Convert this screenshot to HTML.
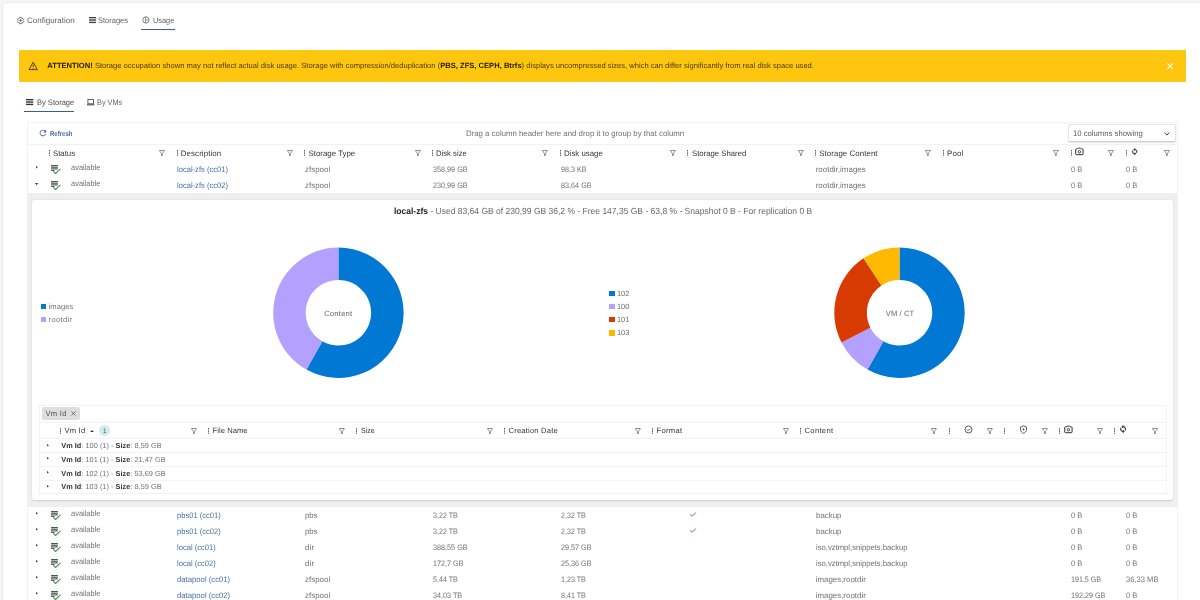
<!DOCTYPE html>
<html><head><meta charset="utf-8"><title>Usage</title>
<style>
html,body{margin:0;padding:0;}
body{width:1200px;height:600px;overflow:hidden;background:#f5f5f5;font-family:"Liberation Sans", sans-serif;position:relative;}
#o{position:absolute;left:0;top:0;width:1200px;height:600px;will-change:transform;}
#w{position:absolute;left:0;top:0;width:1200px;height:600px;}
.t{position:absolute;white-space:nowrap;line-height:1;transform-origin:0 50%;text-rendering:geometricPrecision;}
svg{position:absolute;overflow:visible;}
</style></head><body><div id="o"><div id="w">
<div style="position:absolute;left:3px;top:3px;width:1200px;height:600px;background:#fff;border-radius:3px 0 0 0;box-shadow:0 0 2px rgba(0,0,0,.14);"></div>
<svg style="left:17.1px;top:16.7px" width="7.2" height="7.2" viewBox="0 0 24 24"><path d="M9.30 1.44L14.70 1.44L15.68 4.56L16.60 5.09L19.80 4.38L22.49 9.05L20.28 11.47L20.28 12.53L22.49 14.95L19.80 19.62L16.60 18.91L15.68 19.44L14.70 22.56L9.30 22.56L8.32 19.44L7.40 18.91L4.20 19.62L1.51 14.95L3.72 12.53L3.72 11.47L1.51 9.05L4.20 4.38L7.40 5.09L8.32 4.56z" fill="none" stroke="#6c6c6c" stroke-width="3.100" stroke-linejoin="round"/><circle cx="12" cy="12" r="3.300" fill="#2e2e2e"/></svg>
<svg style="left:88.8px;top:17.3px" width="7" height="6.1" viewBox="0 0 7 6.1"><rect x="0" y="0.00" width="7" height="1.37" fill="#444"/><rect x="0" y="2.36" width="7" height="1.37" fill="#444"/><rect x="0" y="4.73" width="7" height="1.37" fill="#444"/></svg>
<svg style="left:141.9px;top:16.4px" width="7.9" height="7.9" viewBox="0 0 24 24"><circle cx="12" cy="12" r="9.700" fill="none" stroke="#555" stroke-width="2.2"/><path d="M10.600 3v18M10.600 12H21.500" fill="none" stroke="#555" stroke-width="1.900"/></svg>
<div style="position:absolute;left:140.7px;top:29.05px;width:33.9px;height:1.35px;background:#40599c;"></div>
<div style="position:absolute;left:19px;top:49.6px;width:1167px;height:32.3px;background:#ffc60f;border-radius:1px;"></div>
<svg style="left:27.8px;top:61.2px" width="10.4" height="9" viewBox="0 0 24 22"><path d="M12 2.800L22.200 21H1.800z" fill="none" stroke="#4a3a00" stroke-width="2.300" stroke-linejoin="round"/><path d="M12 9v6M12 16.800v2" stroke="#4a3a00" stroke-width="2.200"/></svg>
<svg style="left:1167px;top:62.6px" width="6.2" height="6.2" viewBox="0 0 6.2 6.2"><path d="M.4.400L5.800 5.800M5.800.400L.4 5.800" stroke="#fffaf0" stroke-width="1.100"/></svg>
<svg style="left:26px;top:99px" width="7.3" height="6.1" viewBox="0 0 7.3 6.1"><rect x="0" y="0.00" width="7.3" height="1.37" fill="#333"/><rect x="0" y="2.36" width="7.3" height="1.37" fill="#333"/><rect x="0" y="4.73" width="7.3" height="1.37" fill="#333"/></svg>
<div style="position:absolute;left:24.4px;top:110.65px;width:49.4px;height:1.4px;background:#3b5a9b;"></div>
<svg style="left:86.8px;top:98.9px" width="7.4" height="6.4" viewBox="0 0 7.4 6.4"><rect x=".9" y=".5" width="5.600" height="4.300" fill="none" stroke="#4a4a4a" stroke-width=".85"/><path d="M0 5.800h7.400" stroke="#4a4a4a" stroke-width="1.100"/></svg>
<div style="position:absolute;left:27.2px;top:121.7px;width:1150.8px;height:500px;border:1px solid #f1f1f1;border-bottom:none;box-sizing:border-box;"></div>
<svg style="left:38.35px;top:128.45px" width="9.9" height="9.9" viewBox="0 0 24 24"><path d="M17.650 6.350A8 8 0 1019.730 14h-2.080A6 6 0 1112 6c1.660 0 3.140.69 4.220 1.780L13 11h7V4z" fill="#4d69a6"/></svg>
<div style="position:absolute;left:1068.3px;top:124.3px;width:107.3px;height:17.5px;border:1px solid #e4e4e4;border-bottom-color:#d0d0d0;border-radius:2px;box-sizing:border-box;background:#fff;box-shadow:0 1px 1.500px rgba(0,0,0,.10);"></div>
<svg style="left:1164.4px;top:131.6px" width="5.8" height="3.9" viewBox="0 0 5.8 3.9"><path d="M.4.500L2.900 3.100 5.400.500" fill="none" stroke="#333" stroke-width=".95"/></svg>
<div style="position:absolute;left:27.2px;top:144.3px;width:1150.8px;height:1.2px;background:#f2f2f2;"></div>
<svg style="left:48.8px;top:150.1px" width="1.1" height="5.9" viewBox="0 0 1.1 5.9"><rect x="0" y="0" width="1" height=".95" fill="#4a4a4a"/><rect x="0" y="1.620" width="1" height=".95" fill="#4a4a4a"/><rect x="0" y="3.240" width="1" height=".95" fill="#4a4a4a"/><rect x="0" y="4.860" width="1" height=".95" fill="#4a4a4a"/></svg>
<svg style="left:159.2px;top:150.1px" width="5.8" height="5.9" viewBox="0 0 5.8 5.9"><path d="M.4.500h5L3.350 3.700v1.900H2.450V3.700z" fill="none" stroke="#505050" stroke-width=".62" stroke-linejoin="round"/></svg>
<svg style="left:176.51px;top:150.1px" width="1.1" height="5.9" viewBox="0 0 1.1 5.9"><rect x="0" y="0" width="1" height=".95" fill="#4a4a4a"/><rect x="0" y="1.620" width="1" height=".95" fill="#4a4a4a"/><rect x="0" y="3.240" width="1" height=".95" fill="#4a4a4a"/><rect x="0" y="4.860" width="1" height=".95" fill="#4a4a4a"/></svg>
<svg style="left:286.91px;top:150.1px" width="5.8" height="5.9" viewBox="0 0 5.8 5.9"><path d="M.4.500h5L3.350 3.700v1.900H2.450V3.700z" fill="none" stroke="#505050" stroke-width=".62" stroke-linejoin="round"/></svg>
<svg style="left:304.22px;top:150.1px" width="1.1" height="5.9" viewBox="0 0 1.1 5.9"><rect x="0" y="0" width="1" height=".95" fill="#4a4a4a"/><rect x="0" y="1.620" width="1" height=".95" fill="#4a4a4a"/><rect x="0" y="3.240" width="1" height=".95" fill="#4a4a4a"/><rect x="0" y="4.860" width="1" height=".95" fill="#4a4a4a"/></svg>
<svg style="left:414.62px;top:150.1px" width="5.8" height="5.9" viewBox="0 0 5.8 5.9"><path d="M.4.500h5L3.350 3.700v1.900H2.450V3.700z" fill="none" stroke="#505050" stroke-width=".62" stroke-linejoin="round"/></svg>
<svg style="left:431.93px;top:150.1px" width="1.1" height="5.9" viewBox="0 0 1.1 5.9"><rect x="0" y="0" width="1" height=".95" fill="#4a4a4a"/><rect x="0" y="1.620" width="1" height=".95" fill="#4a4a4a"/><rect x="0" y="3.240" width="1" height=".95" fill="#4a4a4a"/><rect x="0" y="4.860" width="1" height=".95" fill="#4a4a4a"/></svg>
<svg style="left:542.33px;top:150.1px" width="5.8" height="5.9" viewBox="0 0 5.8 5.9"><path d="M.4.500h5L3.350 3.700v1.900H2.450V3.700z" fill="none" stroke="#505050" stroke-width=".62" stroke-linejoin="round"/></svg>
<svg style="left:559.64px;top:150.1px" width="1.1" height="5.9" viewBox="0 0 1.1 5.9"><rect x="0" y="0" width="1" height=".95" fill="#4a4a4a"/><rect x="0" y="1.620" width="1" height=".95" fill="#4a4a4a"/><rect x="0" y="3.240" width="1" height=".95" fill="#4a4a4a"/><rect x="0" y="4.860" width="1" height=".95" fill="#4a4a4a"/></svg>
<svg style="left:670.04px;top:150.1px" width="5.8" height="5.9" viewBox="0 0 5.8 5.9"><path d="M.4.500h5L3.350 3.700v1.900H2.450V3.700z" fill="none" stroke="#505050" stroke-width=".62" stroke-linejoin="round"/></svg>
<svg style="left:687.35px;top:150.1px" width="1.1" height="5.9" viewBox="0 0 1.1 5.9"><rect x="0" y="0" width="1" height=".95" fill="#4a4a4a"/><rect x="0" y="1.620" width="1" height=".95" fill="#4a4a4a"/><rect x="0" y="3.240" width="1" height=".95" fill="#4a4a4a"/><rect x="0" y="4.860" width="1" height=".95" fill="#4a4a4a"/></svg>
<svg style="left:797.75px;top:150.1px" width="5.8" height="5.9" viewBox="0 0 5.8 5.9"><path d="M.4.500h5L3.350 3.700v1.900H2.450V3.700z" fill="none" stroke="#505050" stroke-width=".62" stroke-linejoin="round"/></svg>
<svg style="left:815.06px;top:150.1px" width="1.1" height="5.9" viewBox="0 0 1.1 5.9"><rect x="0" y="0" width="1" height=".95" fill="#4a4a4a"/><rect x="0" y="1.620" width="1" height=".95" fill="#4a4a4a"/><rect x="0" y="3.240" width="1" height=".95" fill="#4a4a4a"/><rect x="0" y="4.860" width="1" height=".95" fill="#4a4a4a"/></svg>
<svg style="left:925.46px;top:150.1px" width="5.8" height="5.9" viewBox="0 0 5.8 5.9"><path d="M.4.500h5L3.350 3.700v1.900H2.450V3.700z" fill="none" stroke="#505050" stroke-width=".62" stroke-linejoin="round"/></svg>
<svg style="left:942.77px;top:150.1px" width="1.1" height="5.9" viewBox="0 0 1.1 5.9"><rect x="0" y="0" width="1" height=".95" fill="#4a4a4a"/><rect x="0" y="1.620" width="1" height=".95" fill="#4a4a4a"/><rect x="0" y="3.240" width="1" height=".95" fill="#4a4a4a"/><rect x="0" y="4.860" width="1" height=".95" fill="#4a4a4a"/></svg>
<svg style="left:1053.17px;top:150.1px" width="5.8" height="5.9" viewBox="0 0 5.8 5.9"><path d="M.4.500h5L3.350 3.700v1.900H2.450V3.700z" fill="none" stroke="#505050" stroke-width=".62" stroke-linejoin="round"/></svg>
<svg style="left:1070.5px;top:150.3px" width="1.1" height="5.9" viewBox="0 0 1.1 5.9"><rect x="0" y="0" width="1" height=".95" fill="#4a4a4a"/><rect x="0" y="1.620" width="1" height=".95" fill="#4a4a4a"/><rect x="0" y="3.240" width="1" height=".95" fill="#4a4a4a"/><rect x="0" y="4.860" width="1" height=".95" fill="#4a4a4a"/></svg>
<svg style="left:1075.3px;top:147.0px" width="8.8" height="8.8" viewBox="0 0 24 24"><path d="M9 3L7.170 5H4a2 2 0 00-2 2v12a2 2 0 002 2h16a2 2 0 002-2V7a2 2 0 00-2-2h-3.170L15 3z" fill="none" stroke="#303030" stroke-width="2.700"/><circle cx="12" cy="13" r="3.300" fill="none" stroke="#303030" stroke-width="2.500"/></svg>
<svg style="left:1108.4px;top:150.1px" width="5.8" height="5.9" viewBox="0 0 5.8 5.9"><path d="M.4.500h5L3.350 3.700v1.900H2.450V3.700z" fill="none" stroke="#505050" stroke-width=".62" stroke-linejoin="round"/></svg>
<svg style="left:1125.5px;top:150.3px" width="1.1" height="5.9" viewBox="0 0 1.1 5.9"><rect x="0" y="0" width="1" height=".95" fill="#4a4a4a"/><rect x="0" y="1.620" width="1" height=".95" fill="#4a4a4a"/><rect x="0" y="3.240" width="1" height=".95" fill="#4a4a4a"/><rect x="0" y="4.860" width="1" height=".95" fill="#4a4a4a"/></svg>
<svg style="left:1131.0px;top:147.9px" width="7.4" height="7.4" viewBox="0 0 24 24"><path d="M12 4V1L8 5l4 4V6a6 6 0 015.300 8.800l1.460 1.460A8 8 0 0012 4zM12 18a6 6 0 01-5.300-8.800L5.240 7.740A8 8 0 0012 20v3l4-4-4-4z" fill="#303030" stroke="#303030" stroke-width="1.300" stroke-linejoin="round"/></svg>
<svg style="left:1163.5px;top:150.1px" width="5.8" height="5.9" viewBox="0 0 5.8 5.9"><path d="M.4.500h5L3.350 3.700v1.900H2.450V3.700z" fill="none" stroke="#505050" stroke-width=".62" stroke-linejoin="round"/></svg>
<svg style="left:35.6px;top:166.0px" width="2.2" height="2.6" viewBox="0 0 2.2 2.6"><path d="M0 0L2 1.300 0 2.600z" fill="#444"/></svg>
<svg style="left:51px;top:164.6px" width="10" height="9.2" viewBox="0 0 10 9.2"><rect x="0" y="0" width="6.900" height="1.150" fill="#555"/><rect x="0" y="1.650" width="6.900" height="1.150" fill="#555"/><rect x="0" y="3.300" width="6.900" height="1.150" fill="#555"/><rect x="0" y="4.950" width="3.600" height="1" fill="#555"/><path d="M2.200 6.300L4.600 8.500 9.400 3.900" fill="none" stroke="#3f9142" stroke-width="1.050"/></svg>
<svg style="left:35.0px;top:182.8px" width="3.2" height="2.4" viewBox="0 0 3.2 2.4"><path d="M0 0H3.200L1.600 2.200z" fill="#3a3a3a"/></svg>
<svg style="left:51px;top:180.6px" width="10" height="9.2" viewBox="0 0 10 9.2"><rect x="0" y="0" width="6.900" height="1.150" fill="#555"/><rect x="0" y="1.650" width="6.900" height="1.150" fill="#555"/><rect x="0" y="3.300" width="6.900" height="1.150" fill="#555"/><rect x="0" y="4.950" width="3.600" height="1" fill="#555"/><path d="M2.200 6.300L4.600 8.500 9.400 3.900" fill="none" stroke="#3f9142" stroke-width="1.050"/></svg>
<svg style="left:35.6px;top:512.0px" width="2.2" height="2.6" viewBox="0 0 2.2 2.6"><path d="M0 0L2 1.300 0 2.600z" fill="#444"/></svg>
<svg style="left:51px;top:510.6px" width="10" height="9.2" viewBox="0 0 10 9.2"><rect x="0" y="0" width="6.900" height="1.150" fill="#555"/><rect x="0" y="1.650" width="6.900" height="1.150" fill="#555"/><rect x="0" y="3.300" width="6.900" height="1.150" fill="#555"/><rect x="0" y="4.950" width="3.600" height="1" fill="#555"/><path d="M2.200 6.300L4.600 8.500 9.400 3.900" fill="none" stroke="#3f9142" stroke-width="1.050"/></svg>
<svg style="left:689.8px;top:511.9px" width="6.2" height="4.6" viewBox="0 0 6.2 4.6"><path d="M.3 2.400L2.200 4.200 5.900.400" fill="none" stroke="#4f934f" stroke-width="1"/></svg>
<svg style="left:35.6px;top:528.0px" width="2.2" height="2.6" viewBox="0 0 2.2 2.6"><path d="M0 0L2 1.300 0 2.600z" fill="#444"/></svg>
<svg style="left:51px;top:526.6px" width="10" height="9.2" viewBox="0 0 10 9.2"><rect x="0" y="0" width="6.900" height="1.150" fill="#555"/><rect x="0" y="1.650" width="6.900" height="1.150" fill="#555"/><rect x="0" y="3.300" width="6.900" height="1.150" fill="#555"/><rect x="0" y="4.950" width="3.600" height="1" fill="#555"/><path d="M2.200 6.300L4.600 8.500 9.400 3.900" fill="none" stroke="#3f9142" stroke-width="1.050"/></svg>
<svg style="left:689.8px;top:527.9px" width="6.2" height="4.6" viewBox="0 0 6.2 4.6"><path d="M.3 2.400L2.200 4.200 5.900.400" fill="none" stroke="#4f934f" stroke-width="1"/></svg>
<svg style="left:35.6px;top:544.0px" width="2.2" height="2.6" viewBox="0 0 2.2 2.6"><path d="M0 0L2 1.300 0 2.600z" fill="#444"/></svg>
<svg style="left:51px;top:542.6px" width="10" height="9.2" viewBox="0 0 10 9.2"><rect x="0" y="0" width="6.900" height="1.150" fill="#555"/><rect x="0" y="1.650" width="6.900" height="1.150" fill="#555"/><rect x="0" y="3.300" width="6.900" height="1.150" fill="#555"/><rect x="0" y="4.950" width="3.600" height="1" fill="#555"/><path d="M2.200 6.300L4.600 8.500 9.400 3.900" fill="none" stroke="#3f9142" stroke-width="1.050"/></svg>
<svg style="left:35.6px;top:560.0px" width="2.2" height="2.6" viewBox="0 0 2.2 2.6"><path d="M0 0L2 1.300 0 2.600z" fill="#444"/></svg>
<svg style="left:51px;top:558.6px" width="10" height="9.2" viewBox="0 0 10 9.2"><rect x="0" y="0" width="6.900" height="1.150" fill="#555"/><rect x="0" y="1.650" width="6.900" height="1.150" fill="#555"/><rect x="0" y="3.300" width="6.900" height="1.150" fill="#555"/><rect x="0" y="4.950" width="3.600" height="1" fill="#555"/><path d="M2.200 6.300L4.600 8.500 9.400 3.900" fill="none" stroke="#3f9142" stroke-width="1.050"/></svg>
<svg style="left:35.6px;top:576.0px" width="2.2" height="2.6" viewBox="0 0 2.2 2.6"><path d="M0 0L2 1.300 0 2.600z" fill="#444"/></svg>
<svg style="left:51px;top:574.6px" width="10" height="9.2" viewBox="0 0 10 9.2"><rect x="0" y="0" width="6.900" height="1.150" fill="#555"/><rect x="0" y="1.650" width="6.900" height="1.150" fill="#555"/><rect x="0" y="3.300" width="6.900" height="1.150" fill="#555"/><rect x="0" y="4.950" width="3.600" height="1" fill="#555"/><path d="M2.200 6.300L4.600 8.500 9.400 3.900" fill="none" stroke="#3f9142" stroke-width="1.050"/></svg>
<svg style="left:35.6px;top:592.0px" width="2.2" height="2.6" viewBox="0 0 2.2 2.6"><path d="M0 0L2 1.300 0 2.600z" fill="#444"/></svg>
<svg style="left:51px;top:590.6px" width="10" height="9.2" viewBox="0 0 10 9.2"><rect x="0" y="0" width="6.900" height="1.150" fill="#555"/><rect x="0" y="1.650" width="6.900" height="1.150" fill="#555"/><rect x="0" y="3.300" width="6.900" height="1.150" fill="#555"/><rect x="0" y="4.950" width="3.600" height="1" fill="#555"/><path d="M2.200 6.300L4.600 8.500 9.400 3.900" fill="none" stroke="#3f9142" stroke-width="1.050"/></svg>
<div style="position:absolute;left:28.2px;top:192.8px;width:1148.8px;height:314px;background:#efefef;"></div>
<div style="position:absolute;left:32px;top:199.8px;width:1141px;height:300.5px;background:#fff;border-radius:2px;box-shadow:0 .9px 1.800px rgba(0,0,0,.14),0 .3px .5px rgba(0,0,0,.05);"></div>
<svg style="left:0;top:0" width="1200" height="600" viewBox="0 0 1200 600"><path d="M338.40 247.55A65.2 65.2 0 1 1 306.47 369.60L322.36 341.31A32.75 32.75 0 1 0 338.40 280.00z" fill="#0078d4"/><path d="M306.47 369.60A65.2 65.2 0 0 1 338.40 247.55L338.40 280.00A32.75 32.75 0 0 0 322.36 341.31z" fill="#b4a0ff"/></svg>
<svg style="left:0;top:0" width="1200" height="600" viewBox="0 0 1200 600"><path d="M899.50 247.55A65.2 65.2 0 1 1 867.57 369.60L883.46 341.31A32.75 32.75 0 1 0 899.50 280.00z" fill="#0078d4"/><path d="M867.57 369.60A65.2 65.2 0 0 1 841.51 342.55L870.37 327.72A32.75 32.75 0 0 0 883.46 341.31z" fill="#b4a0ff"/><path d="M841.51 342.55A65.2 65.2 0 0 1 863.52 258.37L881.43 285.44A32.75 32.75 0 0 0 870.37 327.72z" fill="#d83b01"/><path d="M863.52 258.37A65.2 65.2 0 0 1 899.50 247.55L899.50 280.00A32.75 32.75 0 0 0 881.43 285.44z" fill="#ffb900"/></svg>
<div style="position:absolute;left:41.2px;top:303.8px;width:5.1px;height:5.1px;background:#0078d4;"></div>
<div style="position:absolute;left:41.2px;top:317.0px;width:5.1px;height:5.1px;background:#b4a0ff;"></div>
<div style="position:absolute;left:609.3px;top:290.8px;width:5.3px;height:5.3px;background:#0078d4;"></div>
<div style="position:absolute;left:609.3px;top:303.95px;width:5.3px;height:5.3px;background:#b4a0ff;"></div>
<div style="position:absolute;left:609.3px;top:317.1px;width:5.3px;height:5.3px;background:#d83b01;"></div>
<div style="position:absolute;left:609.3px;top:330.25px;width:5.3px;height:5.3px;background:#ffb900;"></div>
<div style="position:absolute;left:39.2px;top:404.6px;width:1127.8px;height:89.2px;border:1px solid #f2f2f2;box-sizing:border-box;"></div>
<div style="position:absolute;left:41.7px;top:407px;width:38px;height:12.7px;background:#dedede;border-radius:2px;"></div>
<svg style="left:70.9px;top:411.2px" width="4.9" height="4.9" viewBox="0 0 4.9 4.9"><path d="M.4.400L4.500 4.500M4.500.400L.4 4.500" stroke="#444" stroke-width=".7"/></svg>
<div style="position:absolute;left:39.2px;top:422px;width:1127.8px;height:1px;background:#f2f2f2;"></div>
<svg style="left:60.3px;top:428.1px" width="1.1" height="5.9" viewBox="0 0 1.1 5.9"><rect x="0" y="0" width="1" height=".95" fill="#4a4a4a"/><rect x="0" y="1.620" width="1" height=".95" fill="#4a4a4a"/><rect x="0" y="3.240" width="1" height=".95" fill="#4a4a4a"/><rect x="0" y="4.860" width="1" height=".95" fill="#4a4a4a"/></svg>
<svg style="left:191.4px;top:428.1px" width="5.8" height="5.9" viewBox="0 0 5.8 5.9"><path d="M.4.500h5L3.350 3.700v1.900H2.450V3.700z" fill="none" stroke="#505050" stroke-width=".62" stroke-linejoin="round"/></svg>
<svg style="left:208.3px;top:428.1px" width="1.1" height="5.9" viewBox="0 0 1.1 5.9"><rect x="0" y="0" width="1" height=".95" fill="#4a4a4a"/><rect x="0" y="1.620" width="1" height=".95" fill="#4a4a4a"/><rect x="0" y="3.240" width="1" height=".95" fill="#4a4a4a"/><rect x="0" y="4.860" width="1" height=".95" fill="#4a4a4a"/></svg>
<svg style="left:339.4px;top:428.1px" width="5.8" height="5.9" viewBox="0 0 5.8 5.9"><path d="M.4.500h5L3.350 3.700v1.900H2.450V3.700z" fill="none" stroke="#505050" stroke-width=".62" stroke-linejoin="round"/></svg>
<svg style="left:356.3px;top:428.1px" width="1.1" height="5.9" viewBox="0 0 1.1 5.9"><rect x="0" y="0" width="1" height=".95" fill="#4a4a4a"/><rect x="0" y="1.620" width="1" height=".95" fill="#4a4a4a"/><rect x="0" y="3.240" width="1" height=".95" fill="#4a4a4a"/><rect x="0" y="4.860" width="1" height=".95" fill="#4a4a4a"/></svg>
<svg style="left:487.4px;top:428.1px" width="5.8" height="5.9" viewBox="0 0 5.8 5.9"><path d="M.4.500h5L3.350 3.700v1.900H2.450V3.700z" fill="none" stroke="#505050" stroke-width=".62" stroke-linejoin="round"/></svg>
<svg style="left:504.3px;top:428.1px" width="1.1" height="5.9" viewBox="0 0 1.1 5.9"><rect x="0" y="0" width="1" height=".95" fill="#4a4a4a"/><rect x="0" y="1.620" width="1" height=".95" fill="#4a4a4a"/><rect x="0" y="3.240" width="1" height=".95" fill="#4a4a4a"/><rect x="0" y="4.860" width="1" height=".95" fill="#4a4a4a"/></svg>
<svg style="left:635.4px;top:428.1px" width="5.8" height="5.9" viewBox="0 0 5.8 5.9"><path d="M.4.500h5L3.350 3.700v1.900H2.450V3.700z" fill="none" stroke="#505050" stroke-width=".62" stroke-linejoin="round"/></svg>
<svg style="left:652.3px;top:428.1px" width="1.1" height="5.9" viewBox="0 0 1.1 5.9"><rect x="0" y="0" width="1" height=".95" fill="#4a4a4a"/><rect x="0" y="1.620" width="1" height=".95" fill="#4a4a4a"/><rect x="0" y="3.240" width="1" height=".95" fill="#4a4a4a"/><rect x="0" y="4.860" width="1" height=".95" fill="#4a4a4a"/></svg>
<svg style="left:783.4px;top:428.1px" width="5.8" height="5.9" viewBox="0 0 5.8 5.9"><path d="M.4.500h5L3.350 3.700v1.900H2.450V3.700z" fill="none" stroke="#505050" stroke-width=".62" stroke-linejoin="round"/></svg>
<svg style="left:800.3px;top:428.1px" width="1.1" height="5.9" viewBox="0 0 1.1 5.9"><rect x="0" y="0" width="1" height=".95" fill="#4a4a4a"/><rect x="0" y="1.620" width="1" height=".95" fill="#4a4a4a"/><rect x="0" y="3.240" width="1" height=".95" fill="#4a4a4a"/><rect x="0" y="4.860" width="1" height=".95" fill="#4a4a4a"/></svg>
<svg style="left:931.4px;top:428.1px" width="5.8" height="5.9" viewBox="0 0 5.8 5.9"><path d="M.4.500h5L3.350 3.700v1.900H2.450V3.700z" fill="none" stroke="#505050" stroke-width=".62" stroke-linejoin="round"/></svg>
<svg style="left:90px;top:429.9px" width="4" height="2.1" viewBox="0 0 4 2.1"><path d="M0 2.100H4L2 0z" fill="#444"/></svg>
<div style="position:absolute;left:98.800px;top:425.300px;width:10.900px;height:10.900px;border-radius:50%;background:#d5eaec;"></div>
<svg style="left:948.5px;top:428.4px" width="1.1" height="5.9" viewBox="0 0 1.1 5.9"><rect x="0" y="0" width="1" height=".95" fill="#4a4a4a"/><rect x="0" y="1.620" width="1" height=".95" fill="#4a4a4a"/><rect x="0" y="3.240" width="1" height=".95" fill="#4a4a4a"/><rect x="0" y="4.860" width="1" height=".95" fill="#4a4a4a"/></svg>
<svg style="left:963.5px;top:425.1px" width="9" height="9" viewBox="0 0 24 24"><circle cx="12" cy="12" r="9.300" fill="none" stroke="#3a3a3a" stroke-width="2.200"/><path d="M7.500 12.200l3.200 3.200 5.800-6" fill="none" stroke="#3a3a3a" stroke-width="2.200"/></svg>
<svg style="left:986.5px;top:428.1px" width="5.8" height="5.9" viewBox="0 0 5.8 5.9"><path d="M.4.500h5L3.350 3.700v1.900H2.450V3.700z" fill="none" stroke="#505050" stroke-width=".62" stroke-linejoin="round"/></svg>
<svg style="left:1003.5px;top:428.4px" width="1.1" height="5.9" viewBox="0 0 1.1 5.9"><rect x="0" y="0" width="1" height=".95" fill="#4a4a4a"/><rect x="0" y="1.620" width="1" height=".95" fill="#4a4a4a"/><rect x="0" y="3.240" width="1" height=".95" fill="#4a4a4a"/><rect x="0" y="4.860" width="1" height=".95" fill="#4a4a4a"/></svg>
<svg style="left:1018.6px;top:424.9px" width="9" height="9" viewBox="0 0 24 24"><path d="M12 2.200L4 5.500v6c0 5 3.400 9.300 8 10.500 4.600-1.200 8-5.500 8-10.500v-6z" fill="none" stroke="#3a3a3a" stroke-width="2.200"/><circle cx="12" cy="11.500" r="2.500" fill="#3a3a3a"/></svg>
<svg style="left:1041.5px;top:428.1px" width="5.8" height="5.9" viewBox="0 0 5.8 5.9"><path d="M.4.500h5L3.350 3.700v1.900H2.450V3.700z" fill="none" stroke="#505050" stroke-width=".62" stroke-linejoin="round"/></svg>
<svg style="left:1058.5px;top:428.4px" width="1.1" height="5.9" viewBox="0 0 1.1 5.9"><rect x="0" y="0" width="1" height=".95" fill="#4a4a4a"/><rect x="0" y="1.620" width="1" height=".95" fill="#4a4a4a"/><rect x="0" y="3.240" width="1" height=".95" fill="#4a4a4a"/><rect x="0" y="4.860" width="1" height=".95" fill="#4a4a4a"/></svg>
<svg style="left:1063.6px;top:425.2px" width="8.8" height="8.8" viewBox="0 0 24 24"><path d="M9 3L7.170 5H4a2 2 0 00-2 2v12a2 2 0 002 2h16a2 2 0 002-2V7a2 2 0 00-2-2h-3.170L15 3z" fill="none" stroke="#303030" stroke-width="2.700"/><circle cx="12" cy="13" r="3.300" fill="none" stroke="#303030" stroke-width="2.500"/></svg>
<svg style="left:1096.7px;top:428.1px" width="5.8" height="5.9" viewBox="0 0 5.8 5.9"><path d="M.4.500h5L3.350 3.700v1.900H2.450V3.700z" fill="none" stroke="#505050" stroke-width=".62" stroke-linejoin="round"/></svg>
<svg style="left:1113.5px;top:428.4px" width="1.1" height="5.9" viewBox="0 0 1.1 5.9"><rect x="0" y="0" width="1" height=".95" fill="#4a4a4a"/><rect x="0" y="1.620" width="1" height=".95" fill="#4a4a4a"/><rect x="0" y="3.240" width="1" height=".95" fill="#4a4a4a"/><rect x="0" y="4.860" width="1" height=".95" fill="#4a4a4a"/></svg>
<svg style="left:1118.9px;top:425.2px" width="8.2" height="8.2" viewBox="0 0 24 24"><path d="M12 4V1L8 5l4 4V6a6 6 0 015.300 8.800l1.460 1.460A8 8 0 0012 4zM12 18a6 6 0 01-5.300-8.800L5.240 7.740A8 8 0 0012 20v3l4-4-4-4z" fill="#303030" stroke="#303030" stroke-width="1.300" stroke-linejoin="round"/></svg>
<svg style="left:1152.2px;top:428.1px" width="5.8" height="5.9" viewBox="0 0 5.8 5.9"><path d="M.4.500h5L3.350 3.700v1.900H2.450V3.700z" fill="none" stroke="#505050" stroke-width=".62" stroke-linejoin="round"/></svg>
<div style="position:absolute;left:39.2px;top:438.2px;width:1127.8px;height:1px;background:#f2f2f2;"></div>
<svg style="left:47.1px;top:443.8px" width="2.2" height="2.6" viewBox="0 0 2.2 2.6"><path d="M0 0L2 1.300 0 2.600z" fill="#444"/></svg>
<div style="position:absolute;left:39.2px;top:452.25px;width:1127.8px;height:1px;background:#f4f4f4;"></div>
<svg style="left:47.1px;top:457.4px" width="2.2" height="2.6" viewBox="0 0 2.2 2.6"><path d="M0 0L2 1.300 0 2.600z" fill="#444"/></svg>
<div style="position:absolute;left:39.2px;top:465.9px;width:1127.8px;height:1px;background:#f4f4f4;"></div>
<svg style="left:47.1px;top:471.0px" width="2.2" height="2.6" viewBox="0 0 2.2 2.6"><path d="M0 0L2 1.300 0 2.600z" fill="#444"/></svg>
<div style="position:absolute;left:39.2px;top:479.55px;width:1127.8px;height:1px;background:#f4f4f4;"></div>
<svg style="left:47.1px;top:484.6px" width="2.2" height="2.6" viewBox="0 0 2.2 2.6"><path d="M0 0L2 1.300 0 2.600z" fill="#444"/></svg>
<span class="t" style="left:27.05px;top:17.00px;font-size:8px;color:#636363;">Configuration</span>
<span class="t" style="left:98.35px;top:17.00px;font-size:8px;color:#636363;transform:scaleX(0.9366);">Storages</span>
<span class="t" style="left:152.75px;top:17.00px;font-size:8px;color:#636363;transform:scaleX(0.9211);">Usage</span>
<span class="t" style="left:47.35px;top:62.00px;font-size:7.6px;color:#4a3c00;"><b style="color:#221a00">ATTENTION!</b> Storage occupation shown may not reflect actual disk usage. Storage with compression/deduplication (<b style="color:#221a00">PBS, ZFS, CEPH, Btrfs</b>) displays uncompressed sizes, which can differ significantly from real disk space used.</span>
<span class="t" style="left:36.65px;top:99.00px;font-size:7.9px;color:#4c4c4c;transform:scaleX(0.9527);">By Storage</span>
<span class="t" style="left:97.35px;top:99.00px;font-size:7.9px;color:#636363;transform:scaleX(0.9306);">By VMs</span>
<span class="t" style="left:49.95px;top:130.00px;font-size:7.2px;color:#4b68a6;font-weight:bold;transform:scaleX(0.8369);">Refresh</span>
<span class="t" style="left:465.65px;top:130.00px;font-size:7.9px;color:#707070;transform:scaleX(0.9909);">Drag a column header here and drop it to group by that column</span>
<span class="t" style="left:1073.15px;top:130.00px;font-size:7.9px;color:#5c5c5c;transform:scaleX(0.9776);">10 columns showing</span>
<span class="t" style="left:53.05px;top:150.00px;font-size:7.9px;color:#363636;transform:scaleX(0.9877);">Status</span>
<span class="t" style="left:180.76px;top:150.00px;font-size:7.9px;color:#363636;letter-spacing:0.103px;">Description</span>
<span class="t" style="left:308.47px;top:150.00px;font-size:7.9px;color:#363636;">Storage Type</span>
<span class="t" style="left:436.18px;top:150.00px;font-size:7.9px;color:#363636;transform:scaleX(0.9754);">Disk size</span>
<span class="t" style="left:563.89px;top:150.00px;font-size:7.9px;color:#363636;transform:scaleX(0.9937);">Disk usage</span>
<span class="t" style="left:691.60px;top:150.00px;font-size:7.9px;color:#363636;transform:scaleX(0.9822);">Storage Shared</span>
<span class="t" style="left:819.31px;top:150.00px;font-size:7.9px;color:#363636;letter-spacing:0.055px;">Storage Content</span>
<span class="t" style="left:947.02px;top:150.00px;font-size:7.9px;color:#363636;letter-spacing:0.126px;">Pool</span>
<span class="t" style="left:70.95px;top:164.00px;font-size:7.9px;color:#707070;transform:scaleX(0.9468);">available</span>
<span class="t" style="left:177.35px;top:166.00px;font-size:7.9px;color:#456fa9;transform:scaleX(0.9611);">local-zfs (cc01)</span>
<span class="t" style="left:305.05px;top:166.00px;font-size:7.9px;color:#707070;letter-spacing:0.026px;">zfspool</span>
<span class="t" style="left:432.95px;top:166.00px;font-size:7.9px;color:#707070;transform:scaleX(0.9169);">358,99 GB</span>
<span class="t" style="left:560.75px;top:166.00px;font-size:7.9px;color:#707070;transform:scaleX(0.9046);">98,3 KB</span>
<span class="t" style="left:815.65px;top:166.00px;font-size:7.9px;color:#707070;letter-spacing:0.038px;">rootdir,images</span>
<span class="t" style="left:1071.35px;top:166.00px;font-size:7.9px;color:#707070;transform:scaleX(0.9541);">0 B</span>
<span class="t" style="left:1126.35px;top:166.00px;font-size:7.9px;color:#707070;transform:scaleX(0.9541);">0 B</span>
<span class="t" style="left:70.95px;top:180.00px;font-size:7.9px;color:#707070;transform:scaleX(0.9468);">available</span>
<span class="t" style="left:177.35px;top:182.00px;font-size:7.9px;color:#456fa9;transform:scaleX(0.9611);">local-zfs (cc02)</span>
<span class="t" style="left:305.05px;top:182.00px;font-size:7.9px;color:#707070;letter-spacing:0.026px;">zfspool</span>
<span class="t" style="left:432.95px;top:182.00px;font-size:7.9px;color:#707070;transform:scaleX(0.9169);">230,99 GB</span>
<span class="t" style="left:560.75px;top:182.00px;font-size:7.9px;color:#707070;transform:scaleX(0.9177);">83,64 GB</span>
<span class="t" style="left:815.65px;top:182.00px;font-size:7.9px;color:#707070;letter-spacing:0.038px;">rootdir,images</span>
<span class="t" style="left:1071.35px;top:182.00px;font-size:7.9px;color:#707070;transform:scaleX(0.9541);">0 B</span>
<span class="t" style="left:1126.35px;top:182.00px;font-size:7.9px;color:#707070;transform:scaleX(0.9541);">0 B</span>
<span class="t" style="left:70.95px;top:510.00px;font-size:7.9px;color:#707070;transform:scaleX(0.9468);">available</span>
<span class="t" style="left:177.35px;top:512.00px;font-size:7.9px;color:#456fa9;transform:scaleX(0.9600);">pbs01 (cc01)</span>
<span class="t" style="left:305.05px;top:512.00px;font-size:7.9px;color:#707070;transform:scaleX(0.9737);">pbs</span>
<span class="t" style="left:432.95px;top:512.00px;font-size:7.9px;color:#707070;transform:scaleX(0.9018);">3,22 TB</span>
<span class="t" style="left:560.75px;top:512.00px;font-size:7.9px;color:#707070;transform:scaleX(0.9018);">2,32 TB</span>
<span class="t" style="left:815.65px;top:512.00px;font-size:7.9px;color:#707070;transform:scaleX(0.9979);">backup</span>
<span class="t" style="left:1071.35px;top:512.00px;font-size:7.9px;color:#707070;transform:scaleX(0.9541);">0 B</span>
<span class="t" style="left:1126.35px;top:512.00px;font-size:7.9px;color:#707070;transform:scaleX(0.9541);">0 B</span>
<span class="t" style="left:70.95px;top:526.00px;font-size:7.9px;color:#707070;transform:scaleX(0.9468);">available</span>
<span class="t" style="left:177.35px;top:528.00px;font-size:7.9px;color:#456fa9;transform:scaleX(0.9600);">pbs01 (cc02)</span>
<span class="t" style="left:305.05px;top:528.00px;font-size:7.9px;color:#707070;transform:scaleX(0.9737);">pbs</span>
<span class="t" style="left:432.95px;top:528.00px;font-size:7.9px;color:#707070;transform:scaleX(0.9018);">3,22 TB</span>
<span class="t" style="left:560.75px;top:528.00px;font-size:7.9px;color:#707070;transform:scaleX(0.9018);">2,32 TB</span>
<span class="t" style="left:815.65px;top:528.00px;font-size:7.9px;color:#707070;transform:scaleX(0.9979);">backup</span>
<span class="t" style="left:1071.35px;top:528.00px;font-size:7.9px;color:#707070;transform:scaleX(0.9541);">0 B</span>
<span class="t" style="left:1126.35px;top:528.00px;font-size:7.9px;color:#707070;transform:scaleX(0.9541);">0 B</span>
<span class="t" style="left:70.95px;top:542.00px;font-size:7.9px;color:#707070;transform:scaleX(0.9468);">available</span>
<span class="t" style="left:177.35px;top:544.00px;font-size:7.9px;color:#456fa9;transform:scaleX(0.9617);">local (cc01)</span>
<span class="t" style="left:305.05px;top:544.00px;font-size:7.9px;color:#707070;letter-spacing:0.173px;">dir</span>
<span class="t" style="left:432.95px;top:544.00px;font-size:7.9px;color:#707070;transform:scaleX(0.9169);">388,55 GB</span>
<span class="t" style="left:560.75px;top:544.00px;font-size:7.9px;color:#707070;transform:scaleX(0.9147);">29,57 GB</span>
<span class="t" style="left:815.65px;top:544.00px;font-size:7.9px;color:#707070;transform:scaleX(0.9703);">iso,vztmpl,snippets,backup</span>
<span class="t" style="left:1071.35px;top:544.00px;font-size:7.9px;color:#707070;transform:scaleX(0.9541);">0 B</span>
<span class="t" style="left:1126.35px;top:544.00px;font-size:7.9px;color:#707070;transform:scaleX(0.9541);">0 B</span>
<span class="t" style="left:70.95px;top:558.00px;font-size:7.9px;color:#707070;transform:scaleX(0.9468);">available</span>
<span class="t" style="left:177.35px;top:560.00px;font-size:7.9px;color:#456fa9;transform:scaleX(0.9617);">local (cc02)</span>
<span class="t" style="left:305.05px;top:560.00px;font-size:7.9px;color:#707070;letter-spacing:0.173px;">dir</span>
<span class="t" style="left:432.95px;top:560.00px;font-size:7.9px;color:#707070;transform:scaleX(0.9147);">172,7 GB</span>
<span class="t" style="left:560.75px;top:560.00px;font-size:7.9px;color:#707070;transform:scaleX(0.9147);">25,36 GB</span>
<span class="t" style="left:815.65px;top:560.00px;font-size:7.9px;color:#707070;transform:scaleX(0.9703);">iso,vztmpl,snippets,backup</span>
<span class="t" style="left:1071.35px;top:560.00px;font-size:7.9px;color:#707070;transform:scaleX(0.9541);">0 B</span>
<span class="t" style="left:1126.35px;top:560.00px;font-size:7.9px;color:#707070;transform:scaleX(0.9541);">0 B</span>
<span class="t" style="left:70.95px;top:574.00px;font-size:7.9px;color:#707070;transform:scaleX(0.9468);">available</span>
<span class="t" style="left:177.35px;top:576.00px;font-size:7.9px;color:#456fa9;transform:scaleX(0.9778);">datapool (cc01)</span>
<span class="t" style="left:305.05px;top:576.00px;font-size:7.9px;color:#707070;letter-spacing:0.026px;">zfspool</span>
<span class="t" style="left:432.95px;top:576.00px;font-size:7.9px;color:#707070;transform:scaleX(0.9018);">5,44 TB</span>
<span class="t" style="left:560.75px;top:576.00px;font-size:7.9px;color:#707070;transform:scaleX(0.9018);">1,23 TB</span>
<span class="t" style="left:815.65px;top:576.00px;font-size:7.9px;color:#707070;letter-spacing:0.014px;">images,rootdir</span>
<span class="t" style="left:1071.35px;top:576.00px;font-size:7.9px;color:#707070;transform:scaleX(0.9027);">191,5 GB</span>
<span class="t" style="left:1126.35px;top:576.00px;font-size:7.9px;color:#707070;transform:scaleX(0.9621);">36,33 MB</span>
<span class="t" style="left:70.95px;top:590.00px;font-size:7.9px;color:#707070;transform:scaleX(0.9468);">available</span>
<span class="t" style="left:177.35px;top:592.00px;font-size:7.9px;color:#456fa9;transform:scaleX(0.9778);">datapool (cc02)</span>
<span class="t" style="left:305.05px;top:592.00px;font-size:7.9px;color:#707070;letter-spacing:0.026px;">zfspool</span>
<span class="t" style="left:432.95px;top:592.00px;font-size:7.9px;color:#707070;transform:scaleX(0.9156);">34,03 TB</span>
<span class="t" style="left:560.75px;top:592.00px;font-size:7.9px;color:#707070;transform:scaleX(0.9018);">8,41 TB</span>
<span class="t" style="left:815.65px;top:592.00px;font-size:7.9px;color:#707070;letter-spacing:0.014px;">images,rootdir</span>
<span class="t" style="left:1071.35px;top:592.00px;font-size:7.9px;color:#707070;transform:scaleX(0.9116);">192,29 GB</span>
<span class="t" style="left:1126.35px;top:592.00px;font-size:7.9px;color:#707070;transform:scaleX(0.9541);">0 B</span>
<span class="t" style="left:393.95px;top:207.00px;font-size:8.9px;color:#686868;transform:scaleX(0.9579);"><b style="color:#1f1f1f">local-zfs</b> - Used 83,64 GB of 230,99 GB 36,2 % - Free 147,35 GB - 63,8 % - Snapshot 0 B - For replication 0 B</span>
<span class="t" style="left:324.15px;top:310.00px;font-size:7.6px;color:#666;letter-spacing:0.242px;">Content</span>
<span class="t" style="left:885.85px;top:310.00px;font-size:7.6px;color:#666;letter-spacing:0.065px;">VM / CT</span>
<span class="t" style="left:48.55px;top:303.00px;font-size:7.6px;color:#747474;letter-spacing:0.053px;">images</span>
<span class="t" style="left:48.55px;top:316.00px;font-size:7.6px;color:#747474;letter-spacing:0.367px;">rootdir</span>
<span class="t" style="left:617.35px;top:290.00px;font-size:7.6px;color:#6a6a6a;transform:scaleX(0.9628);">102</span>
<span class="t" style="left:617.35px;top:303.00px;font-size:7.6px;color:#6a6a6a;transform:scaleX(0.9628);">100</span>
<span class="t" style="left:617.35px;top:316.00px;font-size:7.6px;color:#6a6a6a;transform:scaleX(0.9628);">101</span>
<span class="t" style="left:617.35px;top:329.00px;font-size:7.6px;color:#6a6a6a;transform:scaleX(0.9628);">103</span>
<span class="t" style="left:45.55px;top:410.00px;font-size:7.6px;color:#505050;letter-spacing:0.251px;">Vm Id</span>
<span class="t" style="left:64.55px;top:427.00px;font-size:7.6px;color:#363636;letter-spacing:0.191px;">Vm Id</span>
<span class="t" style="left:212.55px;top:427.00px;font-size:7.6px;color:#363636;letter-spacing:0.055px;">File Name</span>
<span class="t" style="left:360.55px;top:427.00px;font-size:7.6px;color:#363636;transform:scaleX(0.9201);">Size</span>
<span class="t" style="left:508.55px;top:427.00px;font-size:7.6px;color:#363636;letter-spacing:0.188px;">Creation Date</span>
<span class="t" style="left:656.55px;top:427.00px;font-size:7.6px;color:#363636;letter-spacing:0.290px;">Format</span>
<span class="t" style="left:804.55px;top:427.00px;font-size:7.6px;color:#363636;letter-spacing:0.313px;">Content</span>
<span class="t" style="left:102.53px;top:429.00px;font-size:6.5px;color:#2a5a60;transform:scaleX(0.9500);">1</span>
<span class="t" style="left:61.25px;top:442.00px;font-size:7.3px;color:#737373;letter-spacing:0.047px;"><b style="color:#333">Vm Id</b>: 100 (1) - <b style="color:#333">Size</b>: 8,59 GB</span>
<span class="t" style="left:61.25px;top:456.00px;font-size:7.3px;color:#737373;letter-spacing:0.044px;"><b style="color:#333">Vm Id</b>: 101 (1) - <b style="color:#333">Size</b>: 21,47 GB</span>
<span class="t" style="left:61.25px;top:470.00px;font-size:7.3px;color:#737373;letter-spacing:0.044px;"><b style="color:#333">Vm Id</b>: 102 (1) - <b style="color:#333">Size</b>: 53,69 GB</span>
<span class="t" style="left:61.25px;top:483.00px;font-size:7.3px;color:#737373;letter-spacing:0.047px;"><b style="color:#333">Vm Id</b>: 103 (1) - <b style="color:#333">Size</b>: 8,59 GB</span>
</div></div></body></html>
